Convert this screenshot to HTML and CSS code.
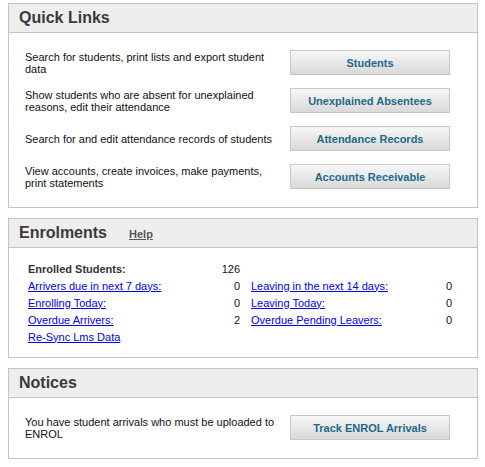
FILE: index.html
```html
<!DOCTYPE html>
<html lang="en">
<head>
  <meta charset="UTF-8" />
  <title>Dashboard</title>
  <link rel="stylesheet" href="styles.css">
</head>
<body>
  <div class="panel">
    <div class="panel-head">
      <h2>Quick Links</h2>
    </div>
    <div class="links">
      <p>Search for students, print lists and export student data</p>
      <button class="btn">Students</button>

      <p>Show students who are absent for unexplained reasons, edit their attendance</p>
      <button class="btn">Unexplained Absentees</button>

      <p>Search for and edit attendance records of students</p>
      <button class="btn">Attendance Records</button>

      <p>View accounts, create invoices, make payments, print statements</p>
      <button class="btn">Accounts Receivable</button>
    </div>
  </div>

  <div class="panel">
    <div class="panel-head">
      <h2>Enrolments</h2>
      <a href="#" class="help">Help</a>
    </div>
    <div class="stats">
      <span class="label">Enrolled Students:</span>
      <span class="num">126</span>
      <span></span>
      <span></span>

      <a href="#">Arrivers due in next 7 days:</a>
      <span class="num">0</span>
      <a href="#" class="second">Leaving in the next 14 days:</a>
      <span class="num">0</span>

      <a href="#">Enrolling Today:</a>
      <span class="num">0</span>
      <a href="#" class="second">Leaving Today:</a>
      <span class="num">0</span>

      <a href="#">Overdue Arrivers:</a>
      <span class="num">2</span>
      <a href="#" class="second">Overdue Pending Leavers:</a>
      <span class="num">0</span>

      <a href="#">Re-Sync Lms Data</a>
    </div>
  </div>

  <div class="panel">
    <div class="panel-head">
      <h2>Notices</h2>
    </div>
    <div class="links">
      <p>You have student arrivals who must be uploaded to ENROL</p>
      <button class="btn">Track ENROL Arrivals</button>
    </div>
  </div>
</body>
</html>
```

FILE: styles.css
```css
body {
  margin: 0;
  padding: 3px 7px 0 8px;
  font-family: "Liberation Sans", Arial, sans-serif;
  font-size: 11px;
  color: #111;
  background-color: #fff;
}
.panel {
  border: 1px solid #c4c4c4;
  margin-bottom: 10px;
}
.panel-head {
  display: flex;
  align-items: baseline;
  gap: 22px;
  height: 28px;
  padding-left: 10px;
  background-color: #eeeeee;
  border-bottom: 1px solid #c4c4c4;
}
.panel-head h2 {
  margin: 0;
  font-size: 16px;
  line-height: 28px;
  color: #3a3a3a;
}
.help {
  font-size: 11px;
  font-weight: bold;
  color: #555;
}
.links {
  display: grid;
  grid-template-columns: 250px 160px;
  column-gap: 15px;
  row-gap: 13px;
  align-items: center;
  padding: 17px 27px 18px 16px;
}
.links p {
  margin: 0;
  line-height: 12px;
}
.btn {
  height: 25px;
  padding: 0;
  border: 1px solid #c8c8c8;
  background: linear-gradient(#f7f7f7, #d9d9d9);
  color: #1d6a8a;
  font-family: inherit;
  font-size: 11px;
  font-weight: bold;
  cursor: pointer;
}
.stats {
  display: grid;
  grid-template-columns: 170px 42px 181px 31px;
  grid-auto-rows: 17px;
  align-items: center;
  padding: 12px 0 12px 19px;
}
.stats a {
  color: #0000ee;
}
.stats .second {
  padding-left: 11px;
}
.label {
  font-weight: bold;
  color: #333;
}
.num {
  text-align: right;
}
```
